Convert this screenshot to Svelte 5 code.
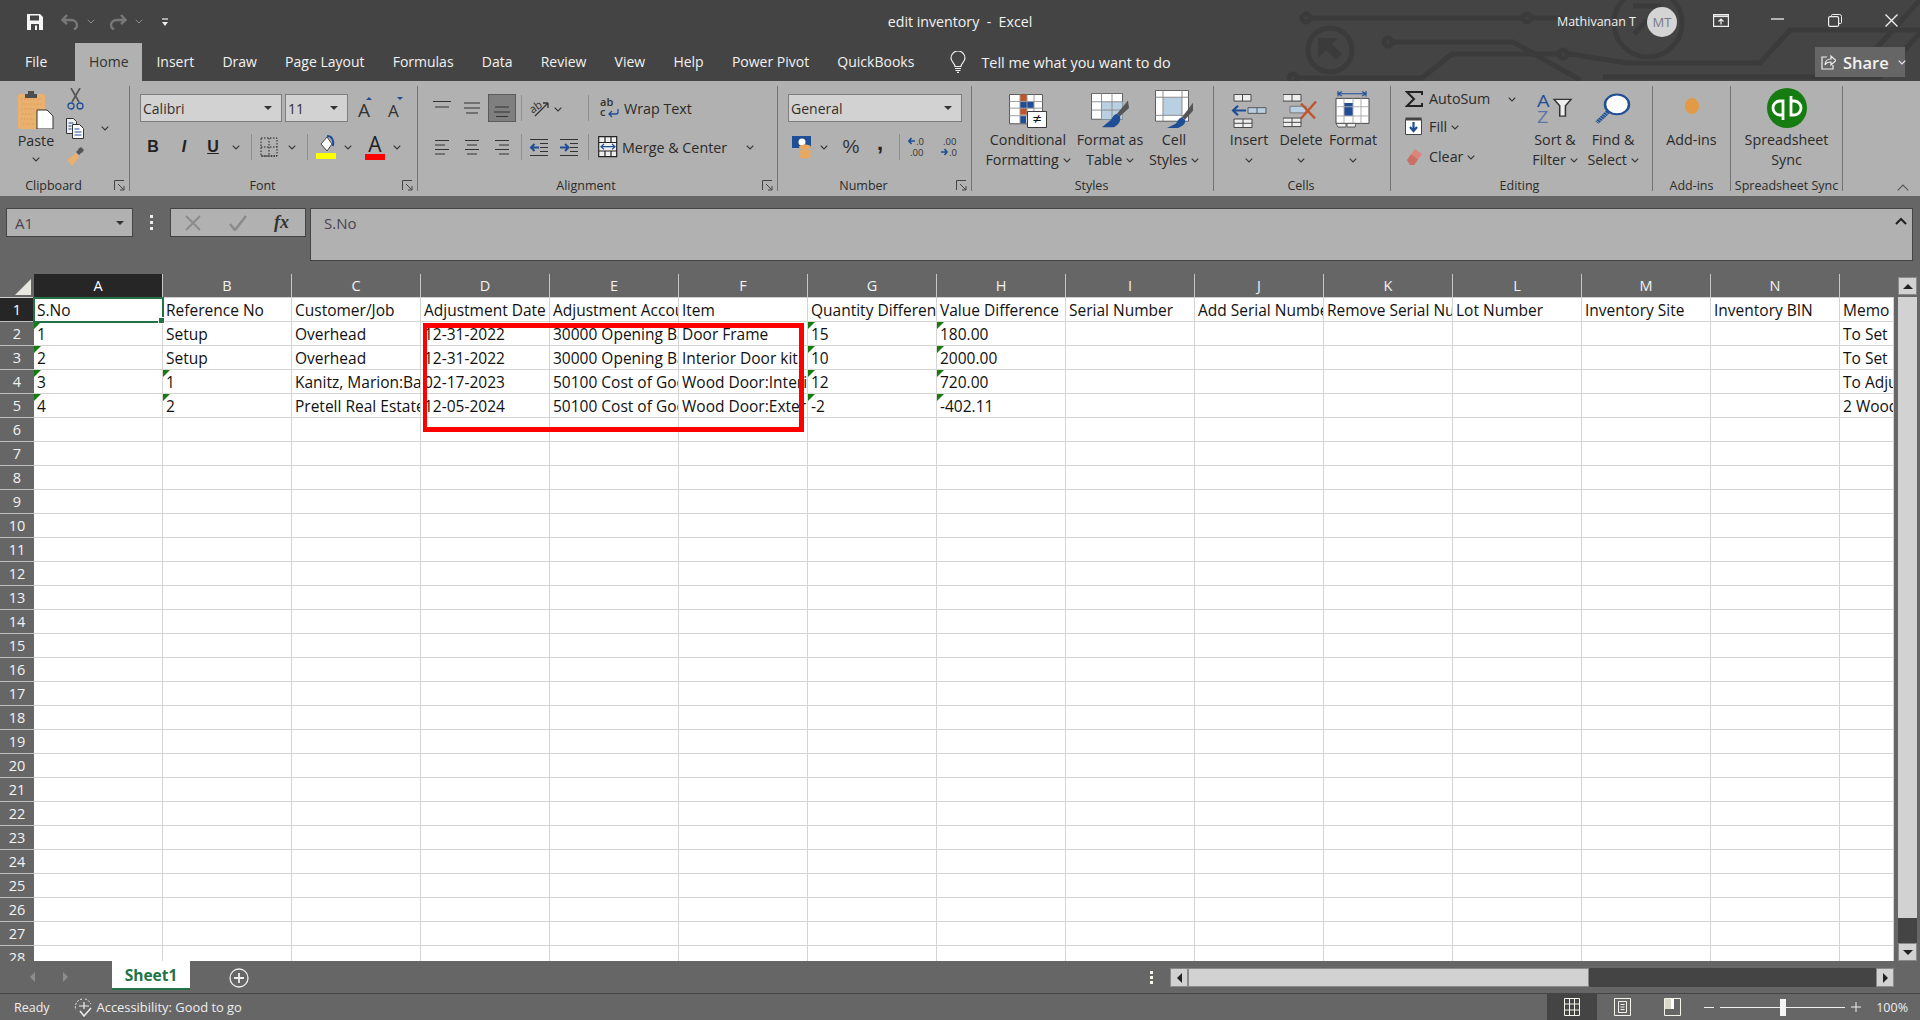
<script>
	const columns = ['A', 'B', 'C', 'D', 'E', 'F', 'G', 'H', 'I', 'J', 'K', 'L', 'M', 'N', ''];
	const tabs = ['File', 'Home', 'Insert', 'Draw', 'Page Layout', 'Formulas', 'Data', 'Review', 'View', 'Help', 'Power Pivot', 'QuickBooks'];

	const data = [
		['S.No', 'Reference No', 'Customer/Job', 'Adjustment Date', 'Adjustment Account', 'Item', 'Quantity Difference', 'Value Difference', 'Serial Number', 'Add Serial Number', 'Remove Serial Number', 'Lot Number', 'Inventory Site', 'Inventory BIN', 'Memo'],
		['1', 'Setup', 'Overhead', '12-31-2022', '30000 Opening Balance', 'Door Frame', '15', '180.00', '', '', '', '', '', '', 'To Set'],
		['2', 'Setup', 'Overhead', '12-31-2022', '30000 Opening Balance', 'Interior Door kit', '10', '2000.00', '', '', '', '', '', '', 'To Set'],
		['3', '1', 'Kanitz, Marion:Bathroom', '02-17-2023', '50100 Cost of Goods Sold', 'Wood Door:Interior', '12', '720.00', '', '', '', '', '', '', 'To Adjust'],
		['4', '2', 'Pretell Real Estate', '12-05-2024', '50100 Cost of Goods Sold', 'Wood Door:Exterior', '-2', '-402.11', '', '', '', '', '', '', '2 Wood']
	];

	const rows = Array.from({ length: 28 }, (_, i) => data[i] ?? columns.map(() => ''));

	// cells that carry Excel's green "number stored as text" marker
	function flagged(r, c) {
		if (r === 0 || r > 4) return false;
		if (c === 0 || c === 6 || c === 7) return true;
		return c === 1 && r > 2;
	}
</script>

{#snippet chev()}
	<svg class="chev" width="8" height="5" viewBox="0 0 8 5"><path d="M.7.7 4 4 7.3.7" fill="none" stroke="#333" stroke-width="1.1" /></svg>
{/snippet}

{#snippet launcher()}
	<svg class="launcher" width="11" height="11" viewBox="0 0 11 11"><path d="M.5 10V.5H10M4 4l6 6M10 6v4H6" fill="none" stroke="#444" /></svg>
{/snippet}

{#snippet sep()}
	<span class="vsep"></span>
{/snippet}

<div class="app">
	<header class="top">
		<svg class="circuit" width="1920" height="81" viewBox="0 0 1920 81" fill="none" stroke="#3b3b3b" stroke-width="5">
			<circle cx="1306" cy="18" r="4" />
			<path d="M1310 18h213M1531 18h30l14 10" />
			<circle cx="1527" cy="18" r="4" />
			<circle cx="1330" cy="50" r="22" />
			<path d="M1318 38h20l-6 6 10 10-6 6-10-10-8 8z" fill="#3b3b3b" stroke="none" />
			<circle cx="1388" cy="42" r="4" />
			<path d="M1392 42h121l67 38" />
			<circle cx="1563" cy="54" r="4" />
			<circle cx="1293" cy="78" r="4" />
			<path d="M1297 78h125l30-24h107M1567 54h3l57 9h133l30-33h130M1863 63l57-63M1603 77h277l40-44" />
			<circle cx="1648" cy="23" r="34" />
			<path d="M1633 6h26v4M1659 8l-25 26" />
		</svg>

		<div class="titlebar">
			<div class="qat">
				<svg width="18" height="16" viewBox="0 0 18 16"><path d="M1 0h13l3 3v13H1z" fill="#f5f5f5" /><path d="M4 1.500h9v5H4z" fill="#444" /><path d="M5 10h8v6H5z" fill="#444" /><path d="M9 11.500h2V16H9z" fill="#f5f5f5" /></svg>
				<svg class="q-undo" width="18" height="16" viewBox="0 0 18 16"><path d="M6 1 1.500 6 6 10M2 6h8c4 0 6 2.500 6 5 0 2-1 3.500-3 4.500" fill="none" stroke="#787878" stroke-width="2.4" /></svg>
				<svg class="q-chev" width="8" height="5" viewBox="0 0 8 5"><path d="M.7.7 4 4 7.3.7" fill="none" stroke="#8a8a8a" /></svg>
				<svg class="q-redo" width="18" height="16" viewBox="0 0 18 16"><path d="M12 1l4.500 5L12 10M16 6H8c-4 0-6 2.500-6 5 0 2 1 3.500 3 4.500" fill="none" stroke="#787878" stroke-width="2.4" /></svg>
				<svg class="q-chev" width="8" height="5" viewBox="0 0 8 5"><path d="M.7.7 4 4 7.3.7" fill="none" stroke="#8a8a8a" /></svg>
				<svg class="q-more" width="8" height="8" viewBox="0 0 8 8"><path d="M1 1h6" stroke="#eee" stroke-width="1.2" /><path d="M1 4h6L4 8z" fill="#eee" /></svg>
			</div>
			<div class="doc-title">edit inventory&nbsp; -&nbsp; Excel</div>
			<div class="win">
				<span class="user">Mathivanan T</span>
				<span class="avatar">MT</span>
				<span class="win-btn">
					<svg width="16" height="13" viewBox="0 0 16 13"><path d="M.6.6h14.800v11.800H.6zM8 10.500V5.500M5.500 7.500 8 5l2.500 2.500" fill="none" stroke="#eee" stroke-width="1.2" /><path d="M.6 2.300h14.800" stroke="#eee" stroke-width="1.6" /></svg>
				</span>
				<span class="win-btn min">
					<svg width="13" height="2" viewBox="0 0 13 2"><path d="M0 1h13" stroke="#eee" stroke-width="1.3" /></svg>
				</span>
				<span class="win-btn">
					<svg width="14" height="13" viewBox="0 0 14 13"><path d="M3.500 2.500V1.500q0-1 1-1h7q2 0 2 2v6q0 1-1 1H11" fill="none" stroke="#eee" /><rect x=".6" y="2.600" width="10" height="9.800" rx="1.5" fill="none" stroke="#eee" stroke-width="1.2" /></svg>
				</span>
				<span class="win-btn">
					<svg width="13" height="13" viewBox="0 0 13 13"><path d="M.5.500l12 12M12.500.500l-12 12" stroke="#f2f2f2" stroke-width="1.3" /></svg>
				</span>
			</div>
		</div>

		<nav class="tabs">
			{#each tabs as tab}
				<span class="tab" class:active={tab === 'Home'}>{tab}</span>
			{/each}
			<span class="tell">
				<svg width="16" height="22" viewBox="0 0 16 22"><path d="M5 15.500c0-3-4-4.500-4-8.500a7 7 0 0 1 14 0c0 4-4 5.500-4 8.500z" fill="none" stroke="#eee" stroke-width="1.2" /><path d="M5 17.500h6M5.500 19.500h5M7 21.300h2" stroke="#eee" stroke-width="1.2" /></svg>
				Tell me what you want to do
			</span>
			<span class="share">
				<svg width="15" height="16" viewBox="0 0 15 16"><path d="M6 3H1v12h11v-4" fill="none" stroke="#eee" stroke-width="1.2" /><path d="M4 11c0-4 3-6 6-6V2l5 4.500L10 11V8c-3 0-5 1-6 3z" fill="none" stroke="#eee" stroke-width="1.2" /></svg>
				<b>Share</b>
				<svg width="8" height="5" viewBox="0 0 8 5"><path d="M.7.700 4 4 7.300.700" fill="none" stroke="#eee" stroke-width="1.1" /></svg>
			</span>
		</nav>
	</header>

	<section class="ribbon">
		<div class="group clipboard">
			<div class="body clip-body">
				<div class="paste">
					<svg width="36" height="39" viewBox="0 0 36 39">
						<rect x="0" y="4" width="27" height="35" rx="2" fill="#eab06f" />
						<path d="M3 9h20M4 14h19M3 19h19M4 24h12M3 29h13M5 34h12" stroke="#d99a55" stroke-dasharray="1.5 1.5" />
						<path d="M7 4h3V1h6v3h3v4H7z" fill="#4d4d4d" />
						<path d="M19 20h10l6 6v13H19z" fill="#fff" stroke="#333" />
					</svg>
					<span class="paste-label">Paste</span>
					{@render chev()}
				</div>
				<div class="clip-tools">
					<svg width="17" height="22" viewBox="0 0 17 22"><path d="M4 0l8 14M13 0 5 14" stroke="#555" stroke-width="1.7" /><circle cx="4" cy="18" r="3" fill="none" stroke="#1f4e96" stroke-width="1.3" /><circle cx="13" cy="18" r="3" fill="none" stroke="#1f4e96" stroke-width="1.3" /></svg>
					<svg width="18" height="21" viewBox="0 0 18 21"><path d="M.5.500h7l3 3v12H.5z" fill="#eee" stroke="#333" /><path d="M6.500 6.500h7l4 4v10h-11z" fill="#fff" stroke="#333" /><path d="M2.500 5h5M2.500 8h3M2.500 11h3M8.500 11h5M8.500 14h7M8.500 17h7" stroke="#1f4e96" /></svg>
					<svg width="17" height="19" viewBox="0 0 17 19"><path d="M9 6 0 13l5 6 7-9z" fill="#eab06f" /><path d="M9 5l3-3 3 3-3 3z" fill="#555" /><path d="M11 2l3-2 3 3-2 3z" fill="#555" /></svg>
				</div>
				<span class="clip-chev">{@render chev()}</span>
			</div>
			<div class="label"><span>Clipboard</span>{@render launcher()}</div>
		</div>

		<div class="group font">
			<div class="body rows">
				<div class="row font-r1">
					<span class="combo"><span class="combo-text">Calibri</span><i class="caret"></i></span>
					<span class="combo"><span class="combo-text">11</span><i class="caret"></i></span>
					<svg width="22" height="22" viewBox="0 0 22 22"><text x="4" y="20" class="glyph-a">A</text><path d="M12 3l3-3 3 3z" fill="#1f4e96" /></svg>
					<svg width="22" height="22" viewBox="0 0 22 22"><text x="5" y="20" class="glyph-a small">A</text><path d="M14 0h6l-3 3z" fill="#1f4e96" /></svg>
				</div>
				<div class="row font-r2">
					<span class="tb bold">B</span>
					<span class="tb ital">I</span>
					<span class="tb und">U</span>
					{@render chev()}
					{@render sep()}
					<svg width="18" height="20" viewBox="0 0 18 20"><path d="M1 1h16v18H1zM9 1v18M1 10h16" fill="none" stroke="#222" stroke-dasharray="1.5 1.5" /><path d="M1 19h16" stroke="#222" stroke-width="1.2" stroke-dasharray="1.5 1" /></svg>
					{@render chev()}
					{@render sep()}
					<svg width="22" height="24" viewBox="0 0 22 24"><path d="M6 9l6-7 5 7-5 7z" fill="#fff" stroke="#444" /><path d="M12 1c5 0 7 4 6 10" fill="none" stroke="#1f4e96" stroke-width="2" /><path d="M1 18h20v6H1z" fill="#ffff00" /></svg>
					{@render chev()}
					<svg width="22" height="26" viewBox="0 0 22 26"><text x="11" y="18" class="glyph-color">A</text><path d="M1 20h20v6H1z" fill="#f00" /></svg>
					{@render chev()}
				</div>
			</div>
			<div class="label"><span>Font</span>{@render launcher()}</div>
		</div>

		<div class="group alignment">
			<div class="body rows">
				<div class="row align-r1">
					<svg width="20" height="24" viewBox="0 0 20 24"><path d="M1 5.500h18M3 11h14" stroke="#333" stroke-width="1.2" /></svg>
					<svg width="20" height="24" viewBox="0 0 20 24"><path d="M2 7h16M2 12h16M4 17h12" stroke="#333" stroke-width="1.2" /></svg>
					<span class="al-active"><svg width="20" height="24" viewBox="0 0 20 24"><path d="M3 11h14M2 16h16M4 20.500h12" stroke="#333" stroke-width="1.2" /></svg></span>
					{@render sep()}
					<svg width="22" height="20" viewBox="0 0 22 20"><text x="1" y="12" class="orient" transform="rotate(-35 8 10)">ab</text><path d="M6 18 19 5M19 5h-5M19 5v5" fill="none" stroke="#333" stroke-width="1.3" /></svg>
					<span>{@render chev()}</span>
					<i></i>
					{@render sep()}
					<span class="cmd wrap">
						<svg width="20" height="20" viewBox="0 0 20 20"><text x="0" y="8" class="mini">ab</text><text x="0" y="18" class="mini">c</text><path d="M18 11v3q0 2-2 2H9M12 13l-3 3 3 3" fill="none" stroke="#1f4e96" stroke-width="1.3" /></svg>
						Wrap Text
					</span>
				</div>
				<div class="row align-r2">
					<svg width="20" height="20" viewBox="0 0 20 20"><path d="M3 3.500h14M3 8h10M3 12.500h14M3 17h10" stroke="#333" /></svg>
					<svg width="20" height="20" viewBox="0 0 20 20"><path d="M3 3.500h14M5 8h10M3 12.500h14M5 17h10" stroke="#333" /></svg>
					<svg width="20" height="20" viewBox="0 0 20 20"><path d="M3 3.500h14M7 8h10M3 12.500h14M7 17h10" stroke="#333" /></svg>
					{@render sep()}
					<svg width="20" height="20" viewBox="0 0 20 20"><path d="M1 2.500h18M11 6.500h8M11 10.500h8M11 14.500h8M1 18.500h18" stroke="#333" /><path d="M10 10.500H2M5.500 7l-3.500 3.500L5.500 14" fill="none" stroke="#1f4e96" stroke-width="2" /></svg>
					<svg width="20" height="20" viewBox="0 0 20 20"><path d="M1 2.500h18M11 6.500h8M11 10.500h8M11 14.500h8M1 18.500h18" stroke="#333" /><path d="M1 10.500h8M6 7l3.500 3.500L6 14" fill="none" stroke="#1f4e96" stroke-width="2" /></svg>
					{@render sep()}
					<span class="cmd merge">
						<svg width="20" height="22" viewBox="0 0 20 22"><path d="M.7.700h18v20H.7zM.7 6.500h18M.7 15h18M7 .7v5.800M13 .7v5.800M7 15v5.700M13 15v5.700" fill="#eee" stroke="#222" stroke-width="1.2" /><path d="M3 10.700h14M6 8l-3 2.700L6 13.400M14 8l3 2.700-3 2.700" fill="none" stroke="#1f4e96" stroke-width="1.2" /></svg>
						Merge &amp; Center
						{@render chev()}
					</span>
				</div>
			</div>
			<div class="label"><span>Alignment</span>{@render launcher()}</div>
		</div>

		<div class="group number">
			<div class="body rows">
				<div class="row"><span class="combo general"><span class="combo-text">General</span><i class="caret"></i></span></div>
				<div class="row num-r2">
					<svg width="20" height="24" viewBox="0 0 20 24"><path d="M0 1h19v12H0z" fill="#1f4e96" /><circle cx="10" cy="7" r="3.5" fill="#fff" /><ellipse cx="13" cy="12" rx="6" ry="2.5" fill="#e8a860" /><ellipse cx="13" cy="17" rx="6" ry="2.5" fill="#e8a860" /><ellipse cx="13" cy="21" rx="6" ry="2.5" fill="#e8a860" /></svg>
					{@render chev()}
					<span class="tb pct">%</span>
					<span class="tb comma">,</span>
					{@render sep()}
					<svg width="18" height="22" viewBox="0 0 18 22"><text x="8" y="9" class="dec">.0</text><text x="2" y="20" class="dec">.00</text><path d="M7 5H1M3.500 2 1 5l2.500 3" fill="none" stroke="#1f4e96" stroke-width="1.7" /></svg>
					<svg width="18" height="22" viewBox="0 0 18 22"><text x="3" y="9" class="dec">.00</text><text x="9" y="20" class="dec">.0</text><path d="M1 16h6M4.500 13 7 16l-2.500 3" fill="none" stroke="#1f4e96" stroke-width="1.7" /></svg>
				</div>
			</div>
			<div class="label"><span>Number</span>{@render launcher()}</div>
		</div>

		<div class="group styles">
			<div class="body bigs">
				<div class="big w84">
					<span class="big-icon">
						<svg width="38" height="34" viewBox="0 0 38 36" preserveAspectRatio="none"><path d="M.5.500h33v31H.5z" fill="#fff" stroke="#555" /><path d="M11 .5h7v7h-7zM11 15h7v7h-7z" fill="#c2542c" /><path d="M11 8h14v7H11zM11 23h6v8h-6z" fill="#1f4e96" /><path d="M.5 8h33M.5 15h33M.5 23h33M11 .5v31M18 .5v31M25 .5v31" stroke="#999" fill="none" /><path d="M18.500 18.500h19v17h-19z" fill="#fff" stroke="#333" /><text x="28" y="32" class="neq">≠</text></svg>
					</span>
					<span>Conditional</span>
					<span>Formatting {@render chev()}</span>
				</div>
				<div class="big w80">
					<span class="big-icon">
						<svg width="38" height="35" viewBox="0 0 38 42" preserveAspectRatio="none"><path d="M.5.500h31v31H.5z" fill="#fff" stroke="#555" /><path d="M10.500 10.500h21v21h-21z" fill="#b9cfe2" /><path d="M.5 10.500h31M.5 20.500h31M10.500.5v31M21 .5v31" stroke="#888" /><path d="M37 9 26 25l3 3 9-10z" fill="#555" /><path d="M26 25c-3 1-4 3-6 7l-9 9h12c5-3 7-7 6-13z" fill="#1f4e96" /></svg>
					</span>
					<span>Format as</span>
					<span>Table {@render chev()}</span>
				</div>
				<div class="big w48">
					<span class="big-icon">
						<svg width="38" height="38" viewBox="0 0 38 42" preserveAspectRatio="none"><path d="M.5.500h33v34H.5z" fill="#fff" stroke="#555" /><path d="M8 8h19v20H8z" fill="#b9cfe2" /><path d="M.5 8h33M.5 28h33M8 .5v34M27 .5v34" stroke="#888" /><path d="M38 14 27 30l3 3 8-10z" fill="#555" /><path d="M27 30c-3 1-4 3-6 7l-9 5h11c5-2 8-5 7-9z" fill="#1f4e96" /></svg>
					</span>
					<span>Cell</span>
					<span>Styles {@render chev()}</span>
				</div>
			</div>
			<div class="label plain">Styles</div>
		</div>

		<div class="group cells">
			<div class="body bigs">
				<div class="big w52">
					<span class="big-icon">
						<svg width="36" height="34" viewBox="0 0 36 36" preserveAspectRatio="none"><path d="M3 .5h17v7H3zM3 26.500h18v9H3z" fill="#eee" stroke="#444" /><path d="M11.500 .5v7M12 26.500v9M3 31h18" stroke="#444" /><path d="M17 14.500h18v6H17z" fill="#b9cfe2" stroke="#555" /><path d="M26 14.500v6" stroke="#555" /><path d="M15 17.500H2M7 12.500l-5 5 5 5" fill="none" stroke="#1f4e96" stroke-width="2.2" /></svg>
					</span>
					<span>Insert</span>
					<span>{@render chev()}</span>
				</div>
				<div class="big w52">
					<span class="big-icon">
						<svg width="36" height="34" viewBox="0 0 36 36" preserveAspectRatio="none"><path d="M0 .5h18v7H0zM0 25.500h18v9H0z" fill="#eee" stroke="#444" /><path d="M9 .5v7M9 25.500v9M0 30h18" stroke="#444" /><path d="M7 13h16v7H7z" fill="#b9cfe2" stroke="#777" /><path d="M18 10l14 16M33 8 18 26" stroke="#c2542c" stroke-width="2.4" /></svg>
					</span>
					<span>Delete</span>
					<span>{@render chev()}</span>
				</div>
				<div class="big w52">
					<span class="big-icon">
						<svg width="36" height="37" viewBox="0 0 36 40" preserveAspectRatio="none"><path d="M3 3h28M3 0v6M31 0v6M7 .5 3 3l4 2.500M27 .5 31 3l-4 2.500" fill="none" stroke="#1f4e96" stroke-width="1.1" /><path d="M1 8h33v27H1z" fill="#fff" stroke="#444" /><path d="M9 13h9v14H9z" fill="#1f4e96" /><path d="M1 17h33M1 27h33M9 8v27M18 8v27M26 8v27" stroke="#aaa" /><path d="M1 35h10v4H3zM12 35h9l-1 4h-8z" fill="#eee" stroke="#555" /></svg>
					</span>
					<span>Format</span>
					<span>{@render chev()}</span>
				</div>
			</div>
			<div class="label plain">Cells</div>
		</div>

		<div class="group editing">
			<div class="body edit-body">
				<div class="edit-list">
					<div class="edit-row">
						<svg width="18" height="16" viewBox="0 0 18 16"><path d="M17 4V1H2l7 7-7 7h15v-3" fill="none" stroke="#222" stroke-width="2" /></svg>
						<span>AutoSum</span>
						<span class="edit-chev">{@render chev()}</span>
					</div>
					<div class="edit-row">
						<svg width="18" height="18" viewBox="0 0 18 18"><path d="M.5 2.500h16v15H.5z" fill="#fff" stroke="#444" /><path d="M.5.500h16v3H.5z" fill="#444" /><path d="M8.500 5v9M5 10l3.500 4 3.500-4" fill="none" stroke="#1f4e96" stroke-width="2.2" /></svg>
						<span>Fill {@render chev()}</span>
					</div>
					<div class="edit-row">
						<svg width="18" height="18" viewBox="0 0 18 18"><path d="M10 1l7 5-8 11-7-5z" fill="#d9857c" /><path d="M2 12l4-5.500 7 5L9 17H5z" fill="#c96f64" /></svg>
						<span>Clear {@render chev()}</span>
					</div>
				</div>
				<div class="big w58">
					<span class="big-icon">
						<svg class="sort-icon" width="36" height="32" viewBox="0 0 38 40" preserveAspectRatio="none"><text x="0" y="17" class="az blue">A</text><text x="0" y="38" class="az soft">Z</text><path d="M18 8h18l-6 8v13h-6V16z" fill="#eee" stroke="#333" stroke-width="1.6" /></svg>
					</span>
					<span>Sort &amp;</span>
					<span>Filter {@render chev()}</span>
				</div>
				<div class="big w58">
					<span class="big-icon">
						<svg class="find-icon" width="36" height="33" viewBox="0 0 36 40" preserveAspectRatio="none"><circle cx="22" cy="15" r="12" fill="#fff" stroke="#1f4e96" stroke-width="2.5" /><path d="M13 24 2 37" stroke="#1f4e96" stroke-width="4.5" stroke-dasharray="2 .7" /></svg>
					</span>
					<span>Find &amp;</span>
					<span>Select {@render chev()}</span>
				</div>
			</div>
			<div class="label plain">Editing</div>
		</div>

		<div class="group addins">
			<div class="body bigs">
				<div class="big wfull">
					<span class="big-icon"><span class="dot"></span></span>
					<span>Add-ins</span>
				</div>
			</div>
			<div class="label plain">Add-ins</div>
		</div>

		<div class="group sync">
			<div class="body bigs">
				<div class="big wfull">
					<span class="big-icon">
						<svg width="40" height="40" viewBox="0 0 40 40"><circle cx="20" cy="20" r="20" fill="#157c10" /><path d="M17 27h-4a7 7 0 0 1 0-14h3v19" fill="none" stroke="#fff" stroke-width="2.8" /><path d="M23 13h4a7 7 0 0 1 0 14h-3V8" fill="none" stroke="#fff" stroke-width="2.8" /></svg>
					</span>
					<span>Spreadsheet</span>
					<span>Sync</span>
				</div>
			</div>
			<div class="label plain">Spreadsheet Sync</div>
		</div>

		<svg class="collapse" width="12" height="7" viewBox="0 0 12 7"><path d="M.7 6.300 6 1l5.300 5.300" fill="none" stroke="#555" stroke-width="1.1" /></svg>
	</section>

	<section class="formula-bar">
		<span class="name-box">A1<i class="caret"></i></span>
		<span class="dots"><i></i><i></i><i></i></span>
		<span class="fx-box">
			<svg width="16" height="16" viewBox="0 0 16 16"><path d="M1 1l14 14M15 1 1 15" stroke="#8a8a8a" stroke-width="1.8" /></svg>
			<svg width="18" height="16" viewBox="0 0 18 16"><path d="M1 9l5 6L17 1" fill="none" stroke="#8a8a8a" stroke-width="2.4" /></svg>
			<span class="fx">fx</span>
		</span>
		<div class="formula-input">
			<span>S.No</span>
			<svg width="12" height="8" viewBox="0 0 12 8"><path d="M1 7 6 2l5 5" fill="none" stroke="#222" stroke-width="2" /></svg>
		</div>
	</section>

	<section class="workspace">
		<div class="sheet">
			<div class="corner"><i></i></div>
			{#each columns as col, c}
				<div class="col-head" class:on={c === 0}>{col}</div>
			{/each}
			{#each rows as row, r}
				<div class="row-head" class:on={r === 0}>{r + 1}</div>
				{#each row as value, c}
					<div class="cell" class:flag={flagged(r, c)} class:selected={r === 0 && c === 0}>{value}</div>
				{/each}
			{/each}
			<div class="callout"></div>
		</div>
		<div class="vscroll">
			<span class="sb-btn"><i class="tri up"></i></span>
			<span class="sb-thumb"></span>
			<span class="sb-track"></span>
			<span class="sb-btn"><i class="tri down"></i></span>
		</div>
	</section>

	<section class="sheetbar">
		<div class="sheet-nav">
			<i class="nav-tri left"></i>
			<i class="nav-tri right"></i>
		</div>
		<span class="sheet-tab">Sheet1</span>
		<svg class="add-sheet" width="20" height="20" viewBox="0 0 20 20"><circle cx="10" cy="10" r="9" fill="none" stroke="#eee" stroke-width="1.3" /><path d="M10 5v10M5 10h10" stroke="#eee" stroke-width="1.8" /></svg>
		<span class="splitter"><i></i><i></i><i></i></span>
		<div class="hscroll">
			<span class="hs-btn"><i class="tri left"></i></span>
			<span class="hs-thumb"></span>
			<span class="hs-track"></span>
			<span class="hs-btn"><i class="tri right"></i></span>
		</div>
	</section>

	<footer class="status">
		<span>Ready</span>
		<svg class="acc" width="20" height="20" viewBox="0 0 20 20"><path d="M8 2a8 8 0 0 0-6 11M11 2c2 0 4 2 6 5" fill="none" stroke="#eee" stroke-dasharray="2 1.5" /><path d="M5 9h10M10 5v7" stroke="#eee" stroke-width="1.2" /><path d="M6 14l4 5 7-8" fill="none" stroke="#eee" stroke-width="1.5" /></svg>
		<span class="acc-text">Accessibility: Good to go</span>
		<div class="views">
			<span class="view on">
				<svg width="16" height="18" viewBox="0 0 16 18"><path d="M.5.500h15v17H.5zM.5 6h15M.5 12h15M5.500.5v17M10.500.5v17" fill="none" stroke="#f4f4ea" /></svg>
			</span>
			<span class="view">
				<svg width="17" height="18" viewBox="0 0 17 18"><path d="M.5.500h16v17H.5z" fill="none" stroke="#f4f4ea" /><path d="M4.500 3.500h8v11h-8zM6.500 6.500h4M6.500 9h4M6.500 11.500h4" fill="none" stroke="#f4f4ea" /></svg>
			</span>
			<span class="view">
				<svg width="17" height="18" viewBox="0 0 17 18"><path d="M.5.500h16v17H.5z" fill="none" stroke="#f4f4ea" /><path d="M1 1h6v10H1z" fill="#d8d8c8" /><path d="M7 1h3v10H7z" fill="#fff" /></svg>
			</span>
		</div>
		<div class="zoom">
			<span class="zoom-sign"></span>
			<span class="zoom-line"><i></i></span>
			<svg width="10" height="10" viewBox="0 0 10 10"><path d="M5 0v10M0 5h10" stroke="#eee" /></svg>
			<span class="zoom-pct">100%</span>
		</div>
	</footer>
</div>

<style>
	:global(body) {
		margin: 0;
		background: #666;
	}

	.app {
		width: 1920px;
		height: 1020px;
		overflow: hidden;
		display: flex;
		flex-direction: column;
		font-family: 'Open Sans', 'Noto Sans', sans-serif;
		font-size: 14.3px;
		color: #2b2b2b;
	}

	svg {
		display: block;
		flex-shrink: 0;
	}

	i {
		display: block;
	}

	/* ===== TITLE ===== */
	.top {
		position: relative;
		height: 81px;
		flex-shrink: 0;
		background: #444;
		color: #f2f2f2;
	}

	.circuit {
		position: absolute;
		left: 0;
		top: 0;
	}

	.titlebar {
		position: relative;
		display: grid;
		grid-template-columns: 1fr auto 1fr;
		align-items: center;
		height: 43px;
	}

	.qat {
		display: flex;
		align-items: center;
		padding-left: 26px;
	}

	.q-undo {
		margin-left: 17px;
	}
	.q-chev {
		margin-left: 8px;
	}
	.q-redo {
		margin-left: 14px;
	}
	.q-more {
		margin-left: 18px;
	}

	.doc-title {
		font-size: 14.2px;
	}

	.win {
		display: flex;
		align-items: center;
		justify-content: flex-end;
	}

	.user {
		font-size: 12.5px;
		margin-right: 11px;
	}

	.avatar {
		width: 30px;
		height: 30px;
		border-radius: 50%;
		background: #d4d4d4;
		color: #7a7a88;
		font-size: 13px;
		display: flex;
		align-items: center;
		justify-content: center;
		margin-right: 15px;
	}

	.win-btn {
		width: 57px;
		display: flex;
		justify-content: center;
		margin-top: -3px;
	}

	.win-btn.min {
		margin-top: -6px;
	}

	.tabs {
		position: relative;
		display: flex;
		align-items: center;
		height: 38px;
		padding-left: 11px;
		font-size: 14px;
	}

	.tab {
		padding: 0 14.1px;
		height: 38px;
		line-height: 38px;
	}

	.tab.active {
		box-sizing: border-box;
		width: 67px;
		padding: 0;
		margin-left: 14px;
		text-align: center;
		background: #b1b1b1;
		color: #333;
	}

	.tell {
		display: flex;
		align-items: center;
		gap: 15px;
		margin-left: 22px;
		font-size: 14.4px;
	}

	.share {
		box-sizing: border-box;
		display: flex;
		align-items: center;
		padding-left: 6px;
		margin-left: auto;
		margin-right: 15px;
		width: 90px;
		height: 30px;
		background: #666;
	}

	.share b {
		font-size: 16.5px;
		font-weight: 600;
		margin: 0 9px 0 7px;
	}

	/* ===== RIBBON ===== */
	.ribbon {
		position: relative;
		display: flex;
		height: 115px;
		flex-shrink: 0;
		background: #b1b1b1;
		padding-top: 5px;
		box-sizing: border-box;
	}

	.group {
		display: flex;
		flex-direction: column;
		box-sizing: border-box;
		height: 105px;
		border-right: 1px solid #737373;
		white-space: nowrap;
	}

	.clipboard {
		width: 130px;
	}
	.font {
		width: 288px;
		padding-left: 10px;
	}
	.alignment {
		width: 360px;
		padding-left: 9px;
	}
	.number {
		width: 194px;
		padding-left: 10px;
	}
	.styles {
		width: 242px;
		padding-left: 14px;
	}
	.cells {
		width: 177px;
		padding-left: 9px;
	}
	.editing {
		width: 262px;
		padding-left: 14px;
	}
	.addins {
		width: 78px;
	}
	.sync {
		width: 112px;
	}

	.body {
		height: 89px;
		flex-shrink: 0;
	}

	.label {
		display: flex;
		align-items: center;
		height: 20px;
		font-size: 12.5px;
		flex-shrink: 0;
	}

	.label span {
		flex: 1;
		text-align: center;
		padding-right: 4px;
	}

	.font .label,
	.alignment .label,
	.number .label {
		margin-left: -10px;
	}

	.label.plain {
		justify-content: center;
	}

	.styles .label {
		margin-left: -16px;
	}
	.cells .label {
		margin-left: -11px;
	}
	.editing .label {
		margin-left: -18px;
	}

	.launcher {
		margin: 0 4px 0 3px;
	}

	.rows {
		display: flex;
		flex-direction: column;
		gap: 11px;
		padding-top: 8px;
		box-sizing: border-box;
	}

	.row {
		height: 28px;
		display: grid;
		align-items: center;
		justify-items: center;
	}

	.vsep {
		width: 1px;
		height: 26px;
		background: #8e8e8e;
	}

	.chev {
		display: inline-block;
		vertical-align: 2px;
	}

	.caret {
		width: 0;
		height: 0;
		border-left: 4px solid transparent;
		border-right: 4px solid transparent;
		border-top: 4px solid #333;
	}

	.combo {
		box-sizing: border-box;
		width: 100%;
		height: 28px;
		display: flex;
		align-items: center;
		justify-content: space-between;
		padding: 0 9px 0 2px;
		background: #d2d2d2;
		border: 1px solid #7d7d7d;
		font-size: 14px;
	}

	.combo-text {
		color: #33302c;
	}

	.general {
		width: 174px;
	}

	.row:has(.general) {
		justify-items: start;
	}

	.tb {
		font-family: 'Liberation Sans', sans-serif;
		font-size: 16px;
		color: #222;
	}
	.bold {
		font-weight: 700;
	}
	.ital {
		font-style: italic;
		font-weight: 700;
	}
	.und {
		font-weight: 700;
		text-decoration: underline;
	}
	.pct {
		font-size: 19px;
		color: #333;
	}
	.comma {
		font-size: 22px;
		font-weight: 700;
		line-height: 14px;
		margin-top: -8px;
	}

	.glyph-a {
		font-family: 'Open Sans', sans-serif;
		font-size: 19px;
		fill: #333;
	}
	.glyph-a.small {
		font-size: 17px;
	}
	.glyph-color {
		font-family: 'Open Sans', sans-serif;
		font-size: 21px;
		fill: #222;
		text-anchor: middle;
	}
	.orient {
		font-family: 'Open Sans', sans-serif;
		font-size: 11px;
		fill: #333;
	}
	.mini {
		font-family: 'Open Sans', sans-serif;
		font-size: 11px;
		font-weight: 600;
		fill: #333;
	}
	.dec {
		font-family: 'Open Sans', sans-serif;
		font-size: 9.5px;
		fill: #333;
	}
	.neq {
		font-family: 'Open Sans', sans-serif;
		font-size: 16px;
		fill: #111;
		text-anchor: middle;
	}
	.az {
		font-family: 'Open Sans', sans-serif;
		font-size: 21px;
	}
	.az.blue {
		fill: #1f4e96;
	}
	.az.soft {
		fill: #5a75a8;
	}

	/* clipboard */
	.clip-body {
		display: grid;
		grid-template-columns: 60px 30px 30px;
	}

	.paste {
		display: flex;
		flex-direction: column;
		align-items: center;
		padding: 4px 0 0 12px;
	}

	.paste-label {
		margin-top: 2px;
		line-height: 20px;
	}

	.paste .chev {
		margin-top: 6px;
	}

	.clip-tools {
		display: flex;
		flex-direction: column;
		align-items: center;
		gap: 8px;
		padding-top: 2px;
	}

	.clip-chev {
		align-self: start;
		margin-top: 32px;
		justify-self: center;
	}

	/* font */
	.font-r1 {
		grid-template-columns: 142px 63px 28px 24px;
		column-gap: 3px;
	}

	.font-r2 {
		grid-template-columns: 26px 36px 22px 24px 6px 30px 16px 14px 24px 20px 34px 10px;
	}

	/* alignment */
	.align-r1 {
		grid-template-columns: 30px 30px 30px 8px 30px 6px 24px 6px auto;
		justify-content: start;
	}

	.align-r2 {
		grid-template-columns: 30px 30px 30px 8px 28px 32px 6px auto;
		justify-content: start;
	}

	.al-active {
		box-sizing: border-box;
		width: 28px;
		height: 28px;
		background: #7f7f7f;
		border: 1px solid #5a5a5a;
		display: flex;
		align-items: center;
		justify-content: center;
	}

	.cmd {
		display: flex;
		align-items: center;
		gap: 4px;
	}

	.wrap {
		margin-left: 9px;
	}

	.merge {
		margin-left: 7px;
	}

	.merge .chev {
		margin-left: 15px;
	}

	/* number */
	.num-r2 {
		grid-template-columns: 28px 16px 38px 20px 18px 18px 46px;
		justify-content: start;
	}

	/* big buttons */
	.bigs {
		display: flex;
	}

	.big {
		display: flex;
		flex-direction: column;
		align-items: center;
		line-height: 20px;
	}

	.big-icon {
		box-sizing: border-box;
		height: 44px;
		padding-bottom: 2px;
		display: flex;
		align-items: flex-end;
		justify-content: center;
	}

	.sort-icon,
	.find-icon {
		margin-bottom: 3px;
	}

	.w84 {
		width: 84px;
	}
	.w80 {
		width: 80px;
	}
	.w48 {
		width: 48px;
	}
	.w52 {
		width: 52px;
	}
	.w58 {
		width: 58px;
	}
	.wfull {
		width: 100%;
	}

	.dot {
		width: 14px;
		height: 16px;
		margin-bottom: 14px;
		border-radius: 50%;
		background: #e39a47;
	}

	/* editing */
	.edit-body {
		display: flex;
	}

	.edit-list {
		width: 121px;
		display: grid;
		grid-template-rows: 25px 30px 31px;
		align-items: center;
	}

	.edit-row {
		display: flex;
		align-items: center;
		gap: 6px;
		height: 100%;
	}

	.edit-chev {
		margin-left: 12px;
	}

	.collapse {
		position: absolute;
		left: 1897px;
		top: 103px;
	}

	/* ===== FORMULA BAR ===== */
	.formula-bar {
		display: flex;
		height: 78px;
		flex-shrink: 0;
		box-sizing: border-box;
		padding: 12px 7px 0 6px;
		background: #666;
		align-items: flex-start;
	}

	.name-box,
	.fx-box,
	.formula-input {
		box-sizing: border-box;
		background: #b1b1b1;
		border: 1px solid #444;
		color: #4a4550;
		font-size: 15px;
	}

	.name-box {
		width: 127px;
		height: 29px;
		display: flex;
		align-items: center;
		justify-content: space-between;
		padding: 0 8px;
	}

	.dots {
		width: 37px;
		height: 29px;
		display: flex;
		flex-direction: column;
		align-items: center;
		justify-content: center;
		gap: 3px;
	}

	.dots i {
		width: 3px;
		height: 3px;
		background: #eee;
	}

	.fx-box {
		width: 136px;
		height: 29px;
		display: flex;
		align-items: center;
		justify-content: space-between;
		padding: 0 16px 0 14px;
	}

	.fx {
		font-family: 'Liberation Serif', serif;
		font-style: italic;
		font-weight: 700;
		font-size: 18px;
		color: #333;
	}

	.formula-input {
		flex: 1;
		margin-left: 4px;
		height: 53px;
		display: flex;
		align-items: flex-start;
		justify-content: space-between;
		padding: 4px 5px 0 13px;
	}

	.formula-input svg {
		margin-top: 4px;
	}

	/* ===== SHEET ===== */
	.workspace {
		display: flex;
		height: 687px;
		flex-shrink: 0;
		background: #666;
	}

	.sheet {
		position: relative;
		display: grid;
		grid-template-columns: 34px repeat(14, 129px) 54px;
		grid-auto-rows: 24px;
		width: 1894px;
		overflow: hidden;
		align-content: start;
		font-size: 15.5px;
	}

	.corner {
		background: #666;
		border-bottom: 1px solid #d0d0d0;
		position: relative;
	}

	.corner i {
		position: absolute;
		right: 3px;
		bottom: 2px;
		border-left: 16px solid transparent;
		border-bottom: 16px solid #e8e8e0;
	}

	.col-head,
	.row-head {
		box-sizing: border-box;
		background: #666;
		color: #f2f2f2;
		display: flex;
		align-items: center;
		justify-content: center;
		font-size: 14.5px;
	}

	.col-head {
		border-right: 1px solid #c6c6c6;
		border-bottom: 1px solid #d0d0d0;
	}

	.col-head:nth-child(16) {
		border-right: 0;
	}

	.row-head {
		border-bottom: 1px solid #c0c0c0;
	}

	.col-head.on,
	.row-head.on {
		background: #262626;
		color: #fff;
	}

	.cell {
		position: relative;
		box-sizing: border-box;
		background: #fff;
		border-right: 1px solid #d4d4d4;
		border-bottom: 1px solid #d4d4d4;
		padding-left: 3px;
		line-height: 24px;
		white-space: nowrap;
		overflow: hidden;
		color: #111;
	}

	.cell.flag::before {
		content: '';
		position: absolute;
		left: 0;
		top: 0;
		border-top: 7px solid #157c10;
		border-right: 7px solid transparent;
	}

	.cell.selected {
		overflow: visible;
		outline: 2px solid #217346;
		outline-offset: -1px;
		z-index: 1;
	}

	.cell.selected::after {
		content: '';
		position: absolute;
		right: -3px;
		bottom: -3px;
		width: 5px;
		height: 5px;
		background: #217346;
		border: 1px solid #fff;
	}

	.callout {
		position: absolute;
		left: 423px;
		top: 49px;
		width: 381px;
		height: 109px;
		box-sizing: border-box;
		border: 5px solid #f00;
		border-left-width: 4px;
		z-index: 2;
	}

	.vscroll {
		display: flex;
		flex-direction: column;
		margin: 3px 3px 0 4px;
		width: 19px;
	}

	.sb-btn {
		height: 18px;
		flex-shrink: 0;
		background: #d2d2d2;
		border: 1px solid #8a8a8a;
		box-sizing: border-box;
		display: flex;
		align-items: center;
		justify-content: center;
	}

	.sb-thumb {
		flex: 1;
		margin-top: 2px;
		background: #d2d2d2;
	}

	.sb-track {
		height: 25px;
		flex-shrink: 0;
		background: #444;
	}

	.tri {
		width: 0;
		height: 0;
		border: 4px solid transparent;
	}
	.tri.up {
		border-bottom: 5px solid #222;
		border-top: 0;
		border-left-width: 5px;
		border-right-width: 5px;
	}
	.tri.down {
		border-top: 5px solid #222;
		border-bottom: 0;
		border-left-width: 5px;
		border-right-width: 5px;
	}
	.tri.left {
		border-right: 5px solid #222;
		border-left: 0;
		border-top-width: 5px;
		border-bottom-width: 5px;
	}
	.tri.right {
		border-left: 5px solid #222;
		border-right: 0;
		border-top-width: 5px;
		border-bottom-width: 5px;
	}

	/* ===== SHEET TABS ===== */
	.sheetbar {
		display: flex;
		height: 33px;
		flex-shrink: 0;
		box-sizing: border-box;
		background: #666;
		border-bottom: 1px solid #444;
	}

	.sheet-nav {
		width: 112px;
		display: flex;
		align-items: center;
		gap: 28px;
		padding-left: 30px;
		box-sizing: border-box;
	}

	.nav-tri {
		border-top: 5px solid transparent;
		border-bottom: 5px solid transparent;
	}
	.nav-tri.left {
		border-right: 5px solid #8d8d8d;
	}
	.nav-tri.right {
		border-left: 5px solid #8d8d8d;
	}

	.sheet-tab {
		box-sizing: border-box;
		width: 78px;
		height: 29px;
		display: flex;
		align-items: center;
		justify-content: center;
		background: #fff;
		color: #217346;
		font-weight: 700;
		font-size: 15.5px;
		border-bottom: 2px solid #217346;
	}

	.add-sheet {
		margin: 7px 0 0 39px;
	}

	.splitter {
		margin: 10px 17px 0 auto;
		display: flex;
		flex-direction: column;
		gap: 2px;
	}

	.splitter i {
		width: 3px;
		height: 3px;
		background: #f5f5e8;
	}

	.hscroll {
		display: flex;
		width: 724px;
		height: 19px;
		margin: 7px 26px 0 0;
	}

	.hs-btn {
		box-sizing: border-box;
		width: 18px;
		flex-shrink: 0;
		background: #d2d2d2;
		border: 1px solid #8a8a8a;
		display: flex;
		align-items: center;
		justify-content: center;
	}

	.hs-thumb {
		width: 401px;
		background: #d2d2d2;
		border: 1px solid #8a8a8a;
		box-sizing: border-box;
	}

	.hs-track {
		flex: 1;
		background: #444;
	}

	/* ===== STATUS BAR ===== */
	.status {
		flex: 1;
		display: flex;
		align-items: center;
		background: #666;
		color: #eee;
		font-size: 12.5px;
		padding-left: 14px;
	}

	.acc {
		margin: 0 3px 0 24px;
	}

	.acc-text {
		font-size: 12.9px;
	}

	.views {
		display: flex;
		align-self: stretch;
		margin-left: auto;
	}

	.view {
		width: 50px;
		display: flex;
		align-items: center;
		justify-content: center;
	}

	.view.on {
		background: #444;
	}

	.zoom {
		display: flex;
		align-items: center;
		width: 223px;
		box-sizing: border-box;
		padding: 0 12px 0 7px;
	}

	.zoom-sign {
		width: 10px;
		height: 1px;
		background: #eee;
	}

	.zoom-line {
		position: relative;
		width: 125px;
		height: 1px;
		margin: 0 6px;
		background: #eee;
	}

	.zoom-line i {
		position: absolute;
		left: 60px;
		top: -8px;
		width: 6px;
		height: 17px;
		background: #f5f5f5;
	}

	.zoom-pct {
		margin-left: auto;
	}
</style>
